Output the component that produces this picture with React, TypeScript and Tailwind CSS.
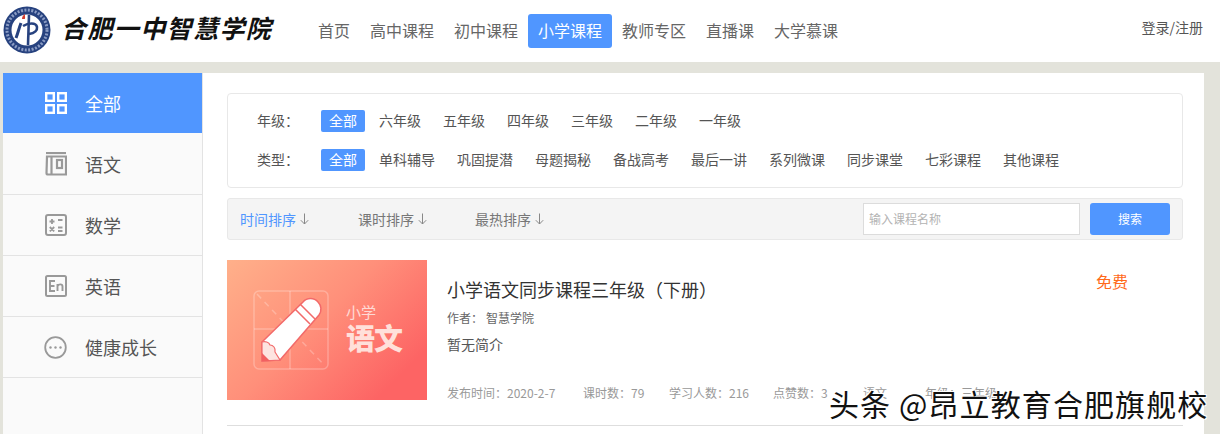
const fontStack = "font-['Noto_Sans_CJK_SC','Noto_Sans',sans-serif]";

const navItems = ["首页", "高中课程", "初中课程", "小学课程", "教师专区", "直播课", "大学慕课"];
const grades = ["全部", "六年级", "五年级", "四年级", "三年级", "二年级", "一年级"];
const types = ["全部", "单科辅导", "巩固提潜", "母题揭秘", "备战高考", "最后一讲", "系列微课", "同步课堂", "七彩课程", "其他课程"];
const sorts = [
  { label: "时间排序", width: "w-[118px]", color: "text-[#5096ff]" },
  { label: "课时排序", width: "w-[117px]", color: "text-[#777]" },
  { label: "最热排序", width: "w-[100px]", color: "text-[#777]" },
];
const meta = [
  { text: "发布时间：2020-2-7", width: "w-[136px]" },
  { text: "课时数：79", width: "w-[86px]" },
  { text: "学习人数：216", width: "w-[104px]" },
  { text: "点赞数：3", width: "w-[90px]" },
  { text: "语文", width: "w-[62px]" },
  { text: "年级：三年级", width: "w-[90px]" },
];

const LogoMark = () => (
  <svg width="48" height="48" viewBox="0 0 48 48" className="-mt-[3px] shrink-0">
    <circle cx="24" cy="24" r="23.5" fill="#27427f" />
    <circle cx="24" cy="24" r="20" fill="none" stroke="#8b9cc4" strokeWidth="3" strokeDasharray="2 1.5" />
    <circle cx="24" cy="24" r="15.5" fill="#fff" />
    <path d="M18 17c-2 5-3 10-5 15" stroke="#27427f" strokeWidth="3" fill="none" />
    <path d="M20 20c5-3 13-4 14 1 .5 3-2 6-8 7" stroke="#27427f" strokeWidth="2.6" fill="none" />
    <path d="M26 9l-1 30" stroke="#27427f" strokeWidth="2.6" fill="none" />
    <path d="M19 13c0-2 1-4 3-5-.4 2 .6 3-.2 5z" fill="#d43c2c" />
  </svg>
);

const GridIcon = () => (
  <svg width="22" height="22" viewBox="0 0 22 22" fill="none" stroke="#fff" strokeWidth="2.4">
    <rect x="1.2" y="1.2" width="7.6" height="7.6" />
    <rect x="13.2" y="1.2" width="7.6" height="7.6" />
    <rect x="1.2" y="13.2" width="7.6" height="7.6" />
    <rect x="13.2" y="13.2" width="7.6" height="7.6" />
  </svg>
);

const BookIcon = () => (
  <svg width="22" height="24" viewBox="0 0 22 24" fill="none" stroke="#999" strokeWidth="2.2">
    <path d="M1 1h20" />
    <path d="M2 4.5h19v18H3a1.5 1.5 0 0 1-1.500-1.500z" />
    <path d="M6.500 5v17" />
    <rect x="12" y="8" width="5" height="8" />
  </svg>
);

const CalcIcon = () => (
  <svg width="22" height="22" viewBox="0 0 22 22" fill="none" stroke="#999" strokeWidth="1.800">
    <rect x="1" y="1" width="20" height="20" rx="2" strokeWidth="2" />
    <path d="M4.500 7.500h5M7 5v5M13 6h4.500M4.800 13l4.400 4.400M9.200 13l-4.400 4.400M13 13.500h4.500M13 17h4.500" />
  </svg>
);

const EnIcon = () => (
  <svg width="22" height="22" viewBox="0 0 22 22" fill="none" stroke="#999" strokeWidth="1.900">
    <rect x="1" y="1" width="20" height="20" rx="1.500" strokeWidth="2" />
    <path d="M10 6H5v10h5M5 11h4.500M12.500 16V9M12.500 11c1-2 5-2.500 5 .5V16" />
  </svg>
);

const MoreIcon = () => (
  <svg width="23" height="23" viewBox="0 0 23 23" fill="none" stroke="#999" strokeWidth="1.800">
    <circle cx="11.500" cy="11.500" r="10.300" />
    <g fill="#999" stroke="none">
      <circle cx="6.500" cy="11.500" r="1.200" />
      <circle cx="11.500" cy="11.500" r="1.200" />
      <circle cx="16.500" cy="11.500" r="1.200" />
    </g>
  </svg>
);

const ArrowDown = () => (
  <svg width="9" height="12" viewBox="0 0 9 12" fill="none" stroke="#888" strokeWidth="1" className="ml-[4px] shrink-0">
    <path d="M4.500 0.500v10.500M0.800 7.200l3.700 3.800 3.700-3.800" />
  </svg>
);

const subjects = [
  { name: "全部", icon: <GridIcon />, active: true },
  { name: "语文", icon: <BookIcon />, active: false },
  { name: "数学", icon: <CalcIcon />, active: false },
  { name: "英语", icon: <EnIcon />, active: false },
  { name: "健康成长", icon: <MoreIcon />, active: false },
];

const PencilArt = () => (
  <svg width="76" height="80" viewBox="0 0 76 80" className="shrink-0">
    <g fill="none" stroke="#fff" strokeOpacity="0.25" strokeWidth="1.500">
      <rect x="1" y="1" width="74" height="78" rx="5" />
      <path d="M37 1v78M1 39h74" />
      <path d="M4 4l68 72" strokeDasharray="6 5" />
    </g>
    <path d="M9 52L50 12a10 10 0 0 1 15 0 10 10 0 0 1 1 13L27 70 9 71z" fill="#fff" stroke="#f26a6a" strokeWidth="1.500" />
    <path d="M42 19l15 15M47 14l15 15" stroke="#f26a6a" strokeWidth="1.500" fill="none" />
    <path d="M9 52c3-1 7 0 8 3 3 0 6 3 5 7l5 8-18 1z" fill="#fde4e0" stroke="#f26a6a" strokeWidth="1.200" />
    <path d="M9 63l8 8H9z" fill="#f26060" />
  </svg>
);

export default function App() {
  return (
    <div className={`h-[434px] w-[1220px] overflow-hidden bg-[#e3e3db] relative ${fontStack}`}>
      <header className="flex h-[62px] items-center bg-white pl-[3px] pr-[17px]">
        <LogoMark />
        <div className="-mt-[7px] ml-[10px] w-[247px] whitespace-nowrap text-[25px] font-bold leading-none tracking-[1.400px] text-[#111] italic">
          合肥一中智慧学院
        </div>
        <nav className="flex items-center">
          {navItems.map((item) => (
            <a
              key={item}
              className={
                item === "小学课程"
                  ? "rounded-[3px] bg-[#5096ff] px-[10px] pb-[1px] text-[16px] leading-[33px] text-white"
                  : "px-[10px] pb-[1px] text-[16px] leading-[33px] text-[#666]"
              }
            >
              {item}
            </a>
          ))}
        </nav>
        <a className="-mt-[7px] ml-auto text-[14px] text-[#555]">登录/注册</a>
      </header>

      <main className="ml-[3px] mr-[16px] mt-[11px] flex h-[361px] bg-white">
        <aside className="w-[200px] shrink-0 border-r border-[#e3e3e3] bg-[#fafafa]">
          {subjects.map((s) => (
            <div
              key={s.name}
              className={
                s.active
                  ? "flex h-[60px] items-center bg-[#5096ff] text-white"
                  : "flex h-[61px] items-center border-b border-[#e3e3e3] text-[#555] [&:nth-child(2)]:mt-[1px]"
              }
            >
              <span className="flex w-[82px] shrink-0 justify-end pr-[18px]">{s.icon}</span>
              <span className="text-[18px]">{s.name}</span>
            </div>
          ))}
        </aside>

        <section className="flex-1 pl-[24px] pr-[21px] pt-[20px]">
          <div className="h-[95px] rounded-[4px] border border-[#e8e8e8] pl-[29px] pt-[16px]">
            <div className="flex h-[22px] items-center text-[14px] text-[#555]">
              <span className="-mt-[2px] w-[64px] shrink-0">年级：</span>
              <div className="flex gap-[6px]">
                {grades.map((g, i) => (
                  <span
                    key={g}
                    className={
                      i === 0
                        ? "rounded-[2px] bg-[#5096ff] px-2 pb-[2px] leading-[20px] text-white"
                        : "px-2 pb-[2px] leading-[20px]"
                    }
                  >
                    {g}
                  </span>
                ))}
              </div>
            </div>
            <div className="mt-[17px] flex h-[22px] items-center text-[14px] text-[#555]">
              <span className="-mt-[2px] w-[64px] shrink-0">类型：</span>
              <div className="flex gap-[6px]">
                {types.map((t, i) => (
                  <span
                    key={t}
                    className={
                      i === 0
                        ? "rounded-[2px] bg-[#5096ff] px-2 pb-[2px] leading-[20px] text-white"
                        : "px-2 pb-[2px] leading-[20px]"
                    }
                  >
                    {t}
                  </span>
                ))}
              </div>
            </div>
          </div>

          <div className="mt-[10px] flex h-[42px] items-center rounded-[3px] border border-[#e8e8e8] bg-[#f4f4f4] pl-[12px]">
            {sorts.map((s) => (
              <span key={s.label} className={`flex items-center ${s.width} text-[14px] ${s.color}`}>
                {s.label}
                <ArrowDown />
              </span>
            ))}
            <div className="ml-auto flex gap-[10px] pr-[12px]">
              <div className="flex h-[32px] w-[217px] items-center border border-[#dcdcdc] bg-white pl-[5px] text-[12px] text-[#b3b3b3]">
                输入课程名称
              </div>
              <button className="h-[32px] w-[80px] rounded-[3px] bg-[#5096ff] text-[12px] text-white">搜索</button>
            </div>
          </div>

          <article className="mt-[20px] flex h-[166px] border-b border-[#dedede]">
            <div className="flex h-[140px] w-[200px] shrink-0 items-center bg-[linear-gradient(135deg,#ffb08a_0%,#ff8f7a_45%,#fd6464_85%)] pl-[26px]">
              <PencilArt />
              <div className="ml-[17px] text-[#fff]">
                <div className="-mt-[6px] text-[15px] leading-[20px] opacity-70">小学</div>
                <div className="text-[29px] font-black leading-[31px] tracking-[-1px] text-[#ffe0da]">语文</div>
              </div>
            </div>
            <div className="ml-[20px] flex-1">
              <div className="flex items-start justify-between pr-[55px]">
                <h3 className="mt-[16px] text-[18px] font-normal leading-[26px] text-[#333]">
                  小学语文同步课程三年级（下册）
                </h3>
                <span className="mt-[9px] text-[16px] leading-[24px] text-[#ff6a1a]">免费</span>
              </div>
              <div className="mt-[7px] flex text-[12px] leading-[18px] text-[#666]">
                <span className="w-[39px]">作者：</span>
                <span>智慧学院</span>
              </div>
              <p className="mt-[8px] text-[14px] leading-[18px] text-[#555]">暂无简介</p>
              <div className="mt-[31px] flex text-[12px] leading-[18px] text-[#999]">
                {meta.map((m) => (
                  <span key={m.text} className={`${m.width} shrink-0 whitespace-nowrap`}>
                    {m.text}
                  </span>
                ))}
              </div>
            </div>
          </article>
        </section>
      </main>

      <div className="absolute left-[829px] top-[382px] whitespace-nowrap text-[30px] leading-[42px] tracking-[1.100px] text-[#111] [text-shadow:1px_1px_0_#fff,-1px_-1px_0_#fff,1px_-1px_0_#fff,-1px_1px_0_#fff]">
        头条 @昂立教育合肥旗舰校
      </div>
    </div>
  );
}
